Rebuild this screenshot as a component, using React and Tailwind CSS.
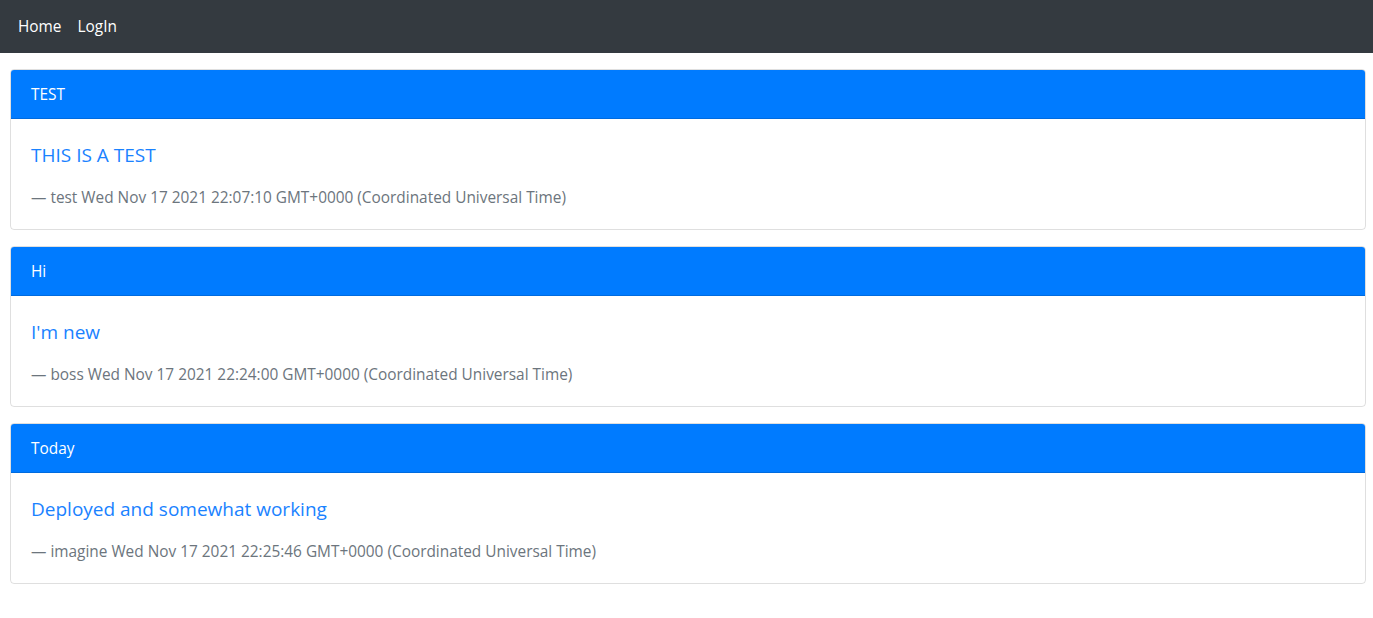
const posts = [
  {
    title: "TEST",
    body: "THIS IS A TEST",
    author: "test",
    date: "Wed Nov 17 2021 22:07:10 GMT+0000 (Coordinated Universal Time)",
  },
  {
    title: "Hi",
    body: "I'm new",
    author: "boss",
    date: "Wed Nov 17 2021 22:24:00 GMT+0000 (Coordinated Universal Time)",
  },
  {
    title: "Today",
    body: "Deployed and somewhat working",
    author: "imagine",
    date: "Wed Nov 17 2021 22:25:46 GMT+0000 (Coordinated Universal Time)",
  },
];

export default function App() {
  return (
    <div
      className="min-h-screen bg-white text-[#212529]"
      style={{ fontFamily: '"Open Sans", "Noto Sans", sans-serif' }}
    >
      {/* Navbar */}
      <nav className="h-[53px] bg-[#343a40] flex items-center px-[18px] gap-[16px] text-[15.4px]">
        <a className="text-white">Home</a>
        <a className="text-white">LogIn</a>
      </nav>

      {/* Posts */}
      <div className="pl-[10px] pr-[7px] pt-4 flex flex-col gap-4">
        {posts.map((p) => (
          <div
            key={p.title}
            className="border border-black/[0.125] rounded overflow-hidden"
          >
            <div className="h-[49px] bg-[#007bff] text-white px-5 pt-[2px] flex items-center text-[15.4px] border-b border-black/[0.125]">
              {p.title}
            </div>
            <div className="px-5 pt-5 pb-[19px]">
              <p className="text-[19px] leading-[30px] pt-px text-[#1a82ff] mb-4">
                {p.body}
              </p>
              <div className="text-[15.4px] leading-6 text-[#6c757d]">
                — {p.author} {p.date}
              </div>
            </div>
          </div>
        ))}
      </div>
    </div>
  );
}
